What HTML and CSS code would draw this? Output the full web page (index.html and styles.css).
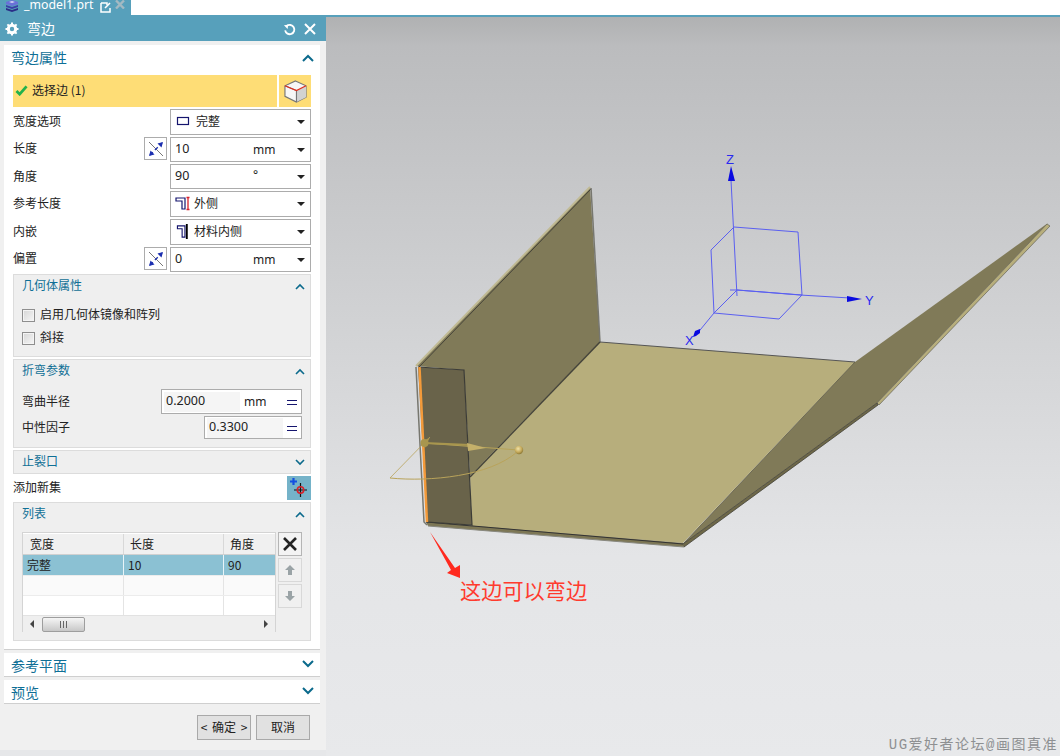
FILE: index.html
```html
<!DOCTYPE html>
<html lang="zh">
<head>
<meta charset="utf-8">
<title>弯边</title>
<link rel="stylesheet" href="styles.css">
</head>
<body>
<div class="app">
  <header class="tabbar">
    <div class="tab">
      <svg class="tab-icon" viewBox="0 0 14 12"><path d="M1 2 7 0l6 2v2L7 6 1 4z" fill="#6a70d8"/><path d="M1 5l6 2 6-2v2L7 9 1 7z" fill="#3a3fa8"/><path d="M1 8l6 2 6-2v2l-6 2-6-2z" fill="#2a2e88"/><path d="M4 2l3-1 3 1-3 1z" fill="#d4d6f4"/></svg>
      <span class="tab-name">_model1.prt</span>
      <svg class="tab-edit" viewBox="0 0 11 11"><path d="M1 1h6v2M10 6v4H1V1" fill="none" stroke="#fff" stroke-width="1.500"/><path d="M5 6l5-5" stroke="#fff" stroke-width="1.600"/></svg>
      <svg class="tab-close" viewBox="0 0 10 9"><path d="M1 .5l8 8M9 .5l-8 8" stroke="#a3b9c2" stroke-width="2.400"/></svg>
    </div>
  </header>
  <div class="main">
    <aside class="dialog">
      <div class="titlebar">
        <svg class="gear" viewBox="0 0 14 14"><circle cx="7" cy="7" r="3.700" fill="none" stroke="#fff" stroke-width="3"/><path d="M7 .5v3M7 10.500v3M.5 7h3M10.500 7h3M2.400 2.400l2 2M9.600 9.600l2 2M11.600 2.400l-2 2M4.400 9.600l-2 2" stroke="#fff" stroke-width="2"/></svg>
        <span class="title">弯边</span>
        <svg class="reset" viewBox="0 0 14 14"><path d="M4 3.200A5 5 0 1 1 2.300 8" fill="none" stroke="#fff" stroke-width="2"/><path d="M1 2.500l4.500-.5-.5 4.500z" fill="#fff"/></svg>
        <svg class="close" viewBox="0 0 12 12"><path d="M1 1l10 10M11 1 1 11" stroke="#fff" stroke-width="2"/></svg>
      </div>
      <div class="body">
        <section class="card card-main">
          <div class="card-head"><span>弯边属性</span><svg class="chev" viewBox="0 0 12 8"><path d="M1 7l5-5 5 5" fill="none" stroke="#0b6a8c" stroke-width="2"/></svg></div>
          <div class="select-row">
            <div class="select-main">
              <svg class="check" viewBox="0 0 14 12"><path d="M1.500 6.500 5 10l7.500-8.500" fill="none" stroke="#22b24c" stroke-width="3"/></svg>
              <span>选择边 (1)</span>
            </div>
            <div class="select-cube">
              <svg viewBox="0 0 24 24" class="cube"><path d="M12 1 23 6v12l-10 5L1 17V6z" fill="#f7f7f7" stroke="#777" stroke-width="1.200"/><path d="M13 11 23 6v12l-10 5z" fill="#d2d2d2"/><path d="M1 6l12 5v12" fill="none" stroke="#777" stroke-width="1.200"/><path d="M1 6l12 5 10-5" fill="none" stroke="#e0301e" stroke-width="1.400"/></svg>
            </div>
          </div>
          <div class="form-row r1">
            <label>宽度选项</label>
            <div class="combo"><svg class="ci" viewBox="0 0 14 12"><rect x="1.500" y="2.500" width="11" height="7" fill="none" stroke="#15156e" stroke-width="1.200"/></svg><span class="ct">完整</span><i class="caret"></i></div>
          </div>
          <div class="form-row r2">
            <label>长度</label>
            <button class="dim-btn"><svg viewBox="0 0 18 18"><path d="M2 2l14 14" stroke="#777"/><path d="M3 15l12-12" stroke="#1c2fb0" stroke-width="1.300" stroke-dasharray="4 3"/><path d="M16 2l-1.500 5.500-4-4zM2 16l1.500-5.500 4 4z" fill="#1c2fb0"/></svg></button>
            <div class="combo"><span class="val">10</span><span class="unit">mm</span><i class="caret"></i></div>
          </div>
          <div class="form-row r2b">
            <label>角度</label>
            <div class="combo"><span class="val">90</span><span class="unit deg">°</span><i class="caret"></i></div>
          </div>
          <div class="form-row r3">
            <label>参考长度</label>
            <div class="combo"><svg class="ci wide" viewBox="0 0 18 14"><path d="M1 1.500h9v11H7v-8H1z" fill="none" stroke="#15156e" stroke-width="1.200"/><path d="M13 1v12M11.500 1h3M11.500 13h3" stroke="#d8212a" stroke-width="1.300"/></svg><span class="ct">外侧</span><i class="caret"></i></div>
          </div>
          <div class="form-row r3b">
            <label>内嵌</label>
            <div class="combo"><svg class="ci wide" viewBox="0 0 18 16"><path d="M2 2h8v12H7V5H2z" fill="none" stroke="#15156e" stroke-width="1.200"/><path d="M12 0v16" stroke="#000" stroke-width="2"/></svg><span class="ct">材料内侧</span><i class="caret"></i></div>
          </div>
          <div class="form-row r4">
            <label>偏置</label>
            <button class="dim-btn"><svg viewBox="0 0 18 18"><path d="M2 2l14 14" stroke="#777"/><path d="M3 15l12-12" stroke="#1c2fb0" stroke-width="1.300" stroke-dasharray="4 3"/><path d="M16 2l-1.500 5.500-4-4zM2 16l1.500-5.500 4 4z" fill="#1c2fb0"/></svg></button>
            <div class="combo"><span class="val">0</span><span class="unit">mm</span><i class="caret"></i></div>
          </div>

          <section class="group g-geo">
            <div class="group-head"><span>几何体属性</span><svg class="chev-s" viewBox="0 0 10 7"><path d="M1 6l4-4 4 4" fill="none" stroke="#0b6a8c" stroke-width="1.600"/></svg></div>
            <div class="check-row first"><i class="box"></i><span>启用几何体镜像和阵列</span></div>
            <div class="check-row"><i class="box"></i><span>斜接</span></div>
          </section>
          <section class="group g-bend">
            <div class="group-head"><span>折弯参数</span><svg class="chev-s" viewBox="0 0 10 7"><path d="M1 6l4-4 4 4" fill="none" stroke="#0b6a8c" stroke-width="1.600"/></svg></div>
            <div class="param-row first"><label>弯曲半径</label><div class="param p-long"><span class="pv">0.2000</span><span class="pu">mm</span><i class="eq"></i></div></div>
            <div class="param-row second"><label>中性因子</label><div class="param p-short"><span class="pv">0.3300</span><i class="eq"></i></div></div>
          </section>
          <section class="group g-relief">
            <div class="group-head"><span>止裂口</span><svg class="chev-s" viewBox="0 0 10 7"><path d="M1 1l4 4 4-4" fill="none" stroke="#0b6a8c" stroke-width="1.600"/></svg></div>
          </section>
          <div class="addset">
            <span>添加新集</span>
            <button class="add-btn"><svg viewBox="0 0 24 24"><path d="M3 5.500h7M6.500 2v7" stroke="#1450e0" stroke-width="2.200"/><path d="M13.500 7v14M7 14h13" stroke="#111" stroke-width="1.200"/><circle cx="13.500" cy="14" r="3.200" fill="none" stroke="#d8212a" stroke-width="1.600"/></svg></button>
          </div>
          <section class="group g-list">
            <div class="group-head"><span>列表</span><svg class="chev-s" viewBox="0 0 10 7"><path d="M1 6l4-4 4 4" fill="none" stroke="#0b6a8c" stroke-width="1.600"/></svg></div>
            <div class="list-wrap">
              <div class="table">
                <div class="trow thead"><div>宽度</div><div>长度</div><div>角度</div></div>
                <div class="trow tsel"><div>完整</div><div>10</div><div>90</div></div>
                <div class="trow tempty alt"><div></div><div></div><div></div></div>
                <div class="trow tempty"><div></div><div></div><div></div></div>
                <div class="hscroll">
                  <svg class="arr" viewBox="0 0 5 8"><path d="M4 0v8L0 4z" fill="#444"/></svg>
                  <div class="thumb"><i></i><i></i><i></i></div>
                  <svg class="arr right" viewBox="0 0 5 8"><path d="M1 0v8l4-4z" fill="#444"/></svg>
                </div>
              </div>
              <div class="side-btns">
                <button class="sb"><svg viewBox="0 0 16 16"><path d="M2 2l12 12M14 2 2 14" stroke="#222" stroke-width="2.600"/></svg></button>
                <button class="sb off"><svg viewBox="0 0 12 12"><path d="M6 1l5 5H8v5H4V6H1z" fill="#9aa3a6"/></svg></button>
                <button class="sb off"><svg viewBox="0 0 12 12"><path d="M6 11l5-5H8V1H4v5H1z" fill="#9aa3a6"/></svg></button>
              </div>
            </div>
          </section>
        </section>
        <section class="card card-fold"><span>参考平面</span><svg class="chev" viewBox="0 0 12 8"><path d="M1 1l5 5 5-5" fill="none" stroke="#0b6a8c" stroke-width="2"/></svg></section>
        <section class="card card-fold"><span>预览</span><svg class="chev" viewBox="0 0 12 8"><path d="M1 1l5 5 5-5" fill="none" stroke="#0b6a8c" stroke-width="2"/></svg></section>
        <div class="actions">
          <button class="act ok">&lt; 确定 &gt;</button>
          <button class="act">取消</button>
        </div>
      </div>
    </aside>
    <main class="viewport">
      <svg class="model" viewBox="326 17 734 739">
        <defs>
          <radialGradient id="ball" cx=".4" cy=".35" r=".7"><stop offset="0" stop-color="#f0e2a8"/><stop offset=".6" stop-color="#c4a95a"/><stop offset="1" stop-color="#84702e"/></radialGradient>
        </defs>
        <!-- left wall -->
        <polygon points="416,366 590,187 600,342 470,476 464,370" fill="#807a58"/>
        <polyline points="416,366 590,187" fill="none" stroke="#c0ba94" stroke-width="2"/>
        <polyline points="418,368 591,189" fill="none" stroke="#45443a" stroke-width="1"/>
        <polyline points="591,188 600,342" fill="none" stroke="#77776f" stroke-width="1.500"/>
        <!-- floor -->
        <polygon points="600,342 855,362 683,543 472,526 470,476" fill="#b7ae7c"/>
        <polyline points="600,342 855,362" fill="none" stroke="#555" stroke-width="1"/>
        <polyline points="600,342 470,477" fill="none" stroke="#45443a" stroke-width="1.500"/>
        <!-- right wall -->
        <polygon points="855,362 1048,223 877,403 683,544" fill="#807a58"/>
        <polyline points="855,362 683,544" fill="none" stroke="#5e5a44" stroke-width=".8"/>
        <polygon points="877,403 1047,224 1050,226 879,405" fill="#b7ae7c" stroke="#55544a" stroke-width=".6"/>
        <polygon points="683,544 877,403 878,405 684,547" fill="#6e6848" stroke="#44433a" stroke-width=".8"/>
        <!-- bottom edge -->
        <polygon points="426,522 683,543 684,547 428,526" fill="#7d7755"/>
        <polyline points="426,522 683,544" fill="none" stroke="#333" stroke-width="1"/>
        <polyline points="428,526 684,547" fill="none" stroke="#88887f" stroke-width="1"/>
        <!-- front flange -->
        <polygon points="418,367 464,370 472,525 427,522" fill="#69634a"/>
        <polyline points="418,367 464,370 472,525 427,522" fill="none" stroke="#3c3c36" stroke-width="1.200"/>
        <polyline points="416,367 424,522 427,525" fill="none" stroke="#77776f" stroke-width="1.500"/>
        <line x1="419.500" y1="367" x2="427" y2="522" stroke="#f39a3a" stroke-width="2.500"/>
        <!-- handle -->
        <path d="M390 478C430 482 490 476 517 452" fill="none" stroke="#b9a35a" stroke-width="1"/>
        <path d="M390 478 430 437" fill="none" stroke="#b9a35a" stroke-width=".8"/>
        <line x1="424" y1="443" x2="518" y2="450" stroke="#b7a358" stroke-width="1"/>
        <path d="M424 443 470 445" stroke="#a8964e" stroke-width="2" fill="none"/>
        <polygon points="467,443 486,448 468,451" fill="#c4b06a"/>
        <polygon points="421,443 430,437 425,448" fill="#a8964e"/>
        <circle cx="424.500" cy="443" r="4" fill="#a8964e"/>
        <circle cx="519" cy="450" r="4.200" fill="url(#ball)"/>
        <!-- WCS -->
        <g fill="none" stroke="#5a5ff0" stroke-width="1">
          <path d="M731 180 737 296M734 227 798 232 802 295 737 290 714 313 779 319 802 295M734 227 711 250 714 313M714 313 696 335M737 290 800 295 850 298M730 290H737"/>
        </g>
        <polygon points="731,166 735,181 728,181" fill="#0a0ae0"/>
        <polygon points="847,296 862,299 847,302" fill="#0a0ae0"/>
        <polygon points="696,336 693,337 695,331 700,329 700,333" fill="#0a0ae0"/>
        <text class="axis" x="726" y="164">Z</text>
        <text class="axis" x="865" y="305">Y</text>
        <text class="axis" x="685" y="345">X</text>
        <!-- annotation arrow -->
        <polygon points="430,532 455,568 460,565 460,578 447,573 451,570" fill="#ff2a1f"/>
      </svg>
      <div class="note">这边可以弯边</div>
      <div class="watermark">UG爱好者论坛@画图真准</div>
    </main>
  </div>
</div>
</body>
</html>
```
FILE: styles.css
```css
* { box-sizing: border-box; }
html, body { margin: 0; padding: 0; }
body {
  width: 1060px;
  height: 756px;
  overflow: hidden;
  font-family: "Noto Sans CJK SC", "Noto Sans", sans-serif;
  font-size: 12px;
  color: #222;
  background: #e6e7e9;
}
.app { display: flex; flex-direction: column; height: 756px; }

.tabbar {
  height: 17px;
  flex: none;
  background: #fff;
  border-bottom: 2px solid #57a0bb;
  display: flex;
}
.tab {
  width: 131px;
  height: 17px;
  background: #57a0bb;
  color: #fff;
  display: flex;
  align-items: flex-start;
  padding-left: 5px;
}
.tab-icon { width: 14px; height: 12px; flex: none; }
.tab-name { margin-left: 5px; font: 12.300px/10px "Noto Sans", sans-serif; }
.tab-edit { width: 11px; height: 11px; margin-left: 7px; margin-top: 2px; flex: none; }
.tab-close { width: 10px; height: 9px; margin-left: 4px; flex: none; }

.main { display: flex; flex: 1; min-height: 0; }
.dialog {
  width: 326px;
  flex: none;
  background: #e6e7e9;
  display: flex;
  flex-direction: column;
}
.titlebar {
  height: 24px;
  flex: none;
  background: #57a0bb;
  color: #fff;
  display: flex;
  align-items: center;
  padding: 0 10px 0 5px;
}
.gear { width: 14px; height: 14px; flex: none; }
.title { margin: 0 0 2px 8px; font-size: 14px; line-height: 20px; flex: 1; }
.reset { width: 13px; height: 13px; margin-right: 8px; }
.close { width: 12px; height: 12px; }

.body {
  height: 709px;
  flex: none;
  background: #f0f0f0;
  padding: 4px 6px 0 4px;
}
.card { background: #fff; width: 316px; }
.card-main { height: 605px; padding: 0 9px; border-bottom: 1px solid #cfcfcf; }
.card-head {
  height: 30px;
  margin: 0 -9px;
  padding: 0 6px 4px 7px;
  display: flex;
  justify-content: space-between;
  align-items: center;
  color: #0f6f96;
  font-size: 14px;
}
.card-head span { margin-bottom: 2px; }
.chev { width: 12px; height: 8px; flex: none; }

.select-row { display: flex; height: 32px; gap: 2px; }
.select-main {
  flex: 1;
  background: #fedd76;
  display: flex;
  align-items: center;
  padding-left: 2px;
  gap: 4px;
}
.select-main span { margin-bottom: 4px; }
.check { width: 13px; height: 11px; flex: none; margin-bottom: 1px; }
.select-cube {
  width: 32px;
  background: #fedd76;
  display: flex;
  align-items: center;
  justify-content: center;
}
.cube { width: 23px; height: 25px; }

.form-row { display: flex; align-items: center; }
.form-row label { flex: 1; margin-bottom: 4px; }
.r1 { height: 26px; margin-top: 2px; }
.r2 { height: 25px; margin-top: 2px; }
.r2b { height: 25px; margin-top: 2px; }
.r2b label { margin-bottom: 2px; }
.r3 { height: 26px; margin-top: 2px; }
.r3b { height: 26px; margin-top: 2px; }
.r4 { height: 25px; margin-top: 2px; }
.combo {
  width: 141px;
  height: 100%;
  border: 1px solid #acacac;
  background: #fff;
  display: flex;
  align-items: center;
  padding-left: 4px;
  position: relative;
}
.ci { width: 14px; height: 12px; flex: none; margin: 0 6px 3px 1px; }
.ci.wide { width: 18px; height: 15px; margin: 0 1px 1px 0; }
.ct { margin-bottom: 3px; }
.val { width: 78px; font: 12.500px "Noto Sans", sans-serif; letter-spacing: .2px; margin-top: -3px; }
.unit { font: 12px "Noto Sans", sans-serif; margin-top: -1px; }
.unit.deg { margin-top: -4px; }
.caret {
  position: absolute;
  right: 5px;
  top: 50%;
  margin-top: -2px;
  border-left: 4px solid transparent;
  border-right: 4px solid transparent;
  border-top: 4px solid #222;
}
.dim-btn {
  width: 23px;
  height: 23px;
  padding: 1px;
  margin: 0 3px 0 0;
  align-self: flex-start;
  background: #fff;
  border: 1px solid #acacac;
  display: flex;
  align-items: center;
  justify-content: center;
}
.dim-btn svg { width: 18px; height: 18px; flex: none; }

.group {
  background: #efefef;
  border: 1px solid #dcdcdc;
  padding: 0 8px;
}
.group-head {
  display: flex;
  justify-content: space-between;
  align-items: center;
  height: 23px;
  margin-right: -3px;
  color: #0f6f96;
}
.group-head span { margin-bottom: 4px; }
.chev-s { width: 10px; height: 7px; flex: none; }
.g-geo { height: 83px; margin-top: 2px; }
.g-bend { height: 89px; margin-top: 2px; }
.g-relief { height: 24px; margin-top: 2px; }
.g-list { height: 139px; }

.check-row { display: flex; align-items: center; height: 23px; gap: 5px; }
.check-row span { margin-bottom: 4px; }
.check-row.first { margin-top: 6px; }
.box {
  width: 13px;
  height: 13px;
  flex: none;
  border: 1px solid #8e8e8e;
  background: linear-gradient(135deg, #d6d6d6, #f6f6f6);
  box-shadow: inset 0 0 0 1px #f4f4f4;
}

.param-row { display: flex; align-items: center; justify-content: space-between; height: 25px; }
.param-row label { margin-bottom: 2px; }
.param-row.first { margin-top: 6px; }
.param-row.second { height: 23px; margin-top: 2px; }
.param {
  height: 100%;
  border: 1px solid #acacac;
  background: #fff;
  display: flex;
  align-items: center;
  position: relative;
}
.p-long { width: 141px; }
.p-short { width: 98px; }
.pv {
  width: 76px;
  margin-left: 2px;
  height: 20px;
  background: #f5f5f5;
  padding-left: 2px;
  font: 12.500px/17px "Noto Sans", sans-serif;
}
.pu { margin-left: 4px; font: 12px "Noto Sans", sans-serif; }
.eq {
  position: absolute;
  right: 4px;
  top: 50%;
  margin-top: -2px;
  width: 10px;
  height: 5px;
  border-top: 1.500px solid #15156e;
  border-bottom: 1.500px solid #15156e;
}

.addset {
  display: flex;
  align-items: center;
  justify-content: space-between;
  height: 28px;
}
.addset span { margin-bottom: 4px; }
.add-btn {
  width: 24px;
  height: 24px;
  padding: 0;
  border: 0;
  background: #75b3c9;
}
.add-btn svg { display: block; width: 24px; height: 24px; }

.list-wrap { display: flex; gap: 2px; margin: 6px 0 0 0; }
.table {
  width: 254px;
  height: 100px;
  border: 1px solid #d4d4d4;
  background: #fff;
  padding-top: 1px;
}
.trow { display: grid; grid-template-columns: 101px 100px 51px; }
.trow > div { border-right: 1px solid #e4e4e4; padding-left: 4px; line-height: 19px; overflow: hidden; }
.trow > div:last-child { border-right: 0; }
.thead { height: 21px; background: #f0f0f0; border-bottom: 1px solid #d0d0d0; }
.thead > div { padding-left: 6px; border-right-color: #d8d8d8; }
.thead > div:first-child { padding-left: 7px; }
.tsel { height: 20px; background: #8bc1d3; }
.tsel > div { line-height: 19px; border-right-color: #e8f4f8; }
.tempty { height: 20px; border-top: 1px solid #ececec; }
.tempty.alt { background: #fafafa; }
.hscroll {
  height: 17px;
  background: #efefef;
  display: flex;
  align-items: center;
  padding: 0 7px;
  border-top: 1px solid #e2e2e2;
}
.arr { width: 5px; height: 8px; flex: none; }
.arr.right { margin-left: auto; }
.thumb {
  width: 43px;
  height: 15px;
  margin-left: 7px;
  border: 1px solid #9e9e9e;
  border-radius: 2px;
  background: linear-gradient(#f5f5f5, #c8c8c8);
  display: flex;
  gap: 1px;
  justify-content: center;
  align-items: center;
}
.thumb i { width: 1px; height: 7px; background: #666; margin-right: 1px; }

.side-btns { display: flex; flex-direction: column; gap: 2px; }
.sb {
  width: 24px;
  height: 24px;
  padding: 0;
  background: #f3f3f3;
  border: 1px solid #b5b5b5;
  display: flex;
  align-items: center;
  justify-content: center;
}
.sb svg { width: 16px; height: 16px; }
.sb.off { background: #f0f0f0; border-color: #d8d8d8; }
.sb.off svg { width: 12px; height: 12px; }

.card-fold {
  height: 24px;
  margin-top: 3px;
  padding: 0 6px 2px 7px;
  border-bottom: 1px solid #cfcfcf;
  display: flex;
  align-items: center;
  justify-content: space-between;
  color: #0f6f96;
  font-size: 14px;
}
.card-fold span { margin-top: 3px; }
.actions {
  display: flex;
  justify-content: flex-end;
  gap: 5px;
  margin-top: 11px;
  padding-right: 10px;
}
.act {
  width: 54px;
  height: 25px;
  padding: 0 0 2px;
  font: 12px "Noto Sans CJK SC", sans-serif;
  color: #222;
  background: #e1e1e1;
  border: 1px solid #a9a9a9;
}
.act.ok { word-spacing: 2px; }

.viewport {
  flex: 1;
  position: relative;
  background: linear-gradient(#b0b1b2 0, #bbbcbe 4%, #e4e5e7 73%, #e8e9eb 100%);
  overflow: hidden;
}
.model { display: block; width: 734px; height: 739px; }
.axis { font: 13px "Liberation Sans", sans-serif; fill: #2a2af0; }
.note {
  position: absolute;
  left: 134px;
  top: 558px;
  font-size: 21.200px;
  line-height: 30px;
  color: #ff3b2e;
}
.watermark {
  position: absolute;
  right: 2px;
  bottom: 2px;
  font: 14px/18px "Liberation Mono", "Noto Sans CJK SC", monospace;
  letter-spacing: 1.500px;
  color: #8e9092;
}
```
